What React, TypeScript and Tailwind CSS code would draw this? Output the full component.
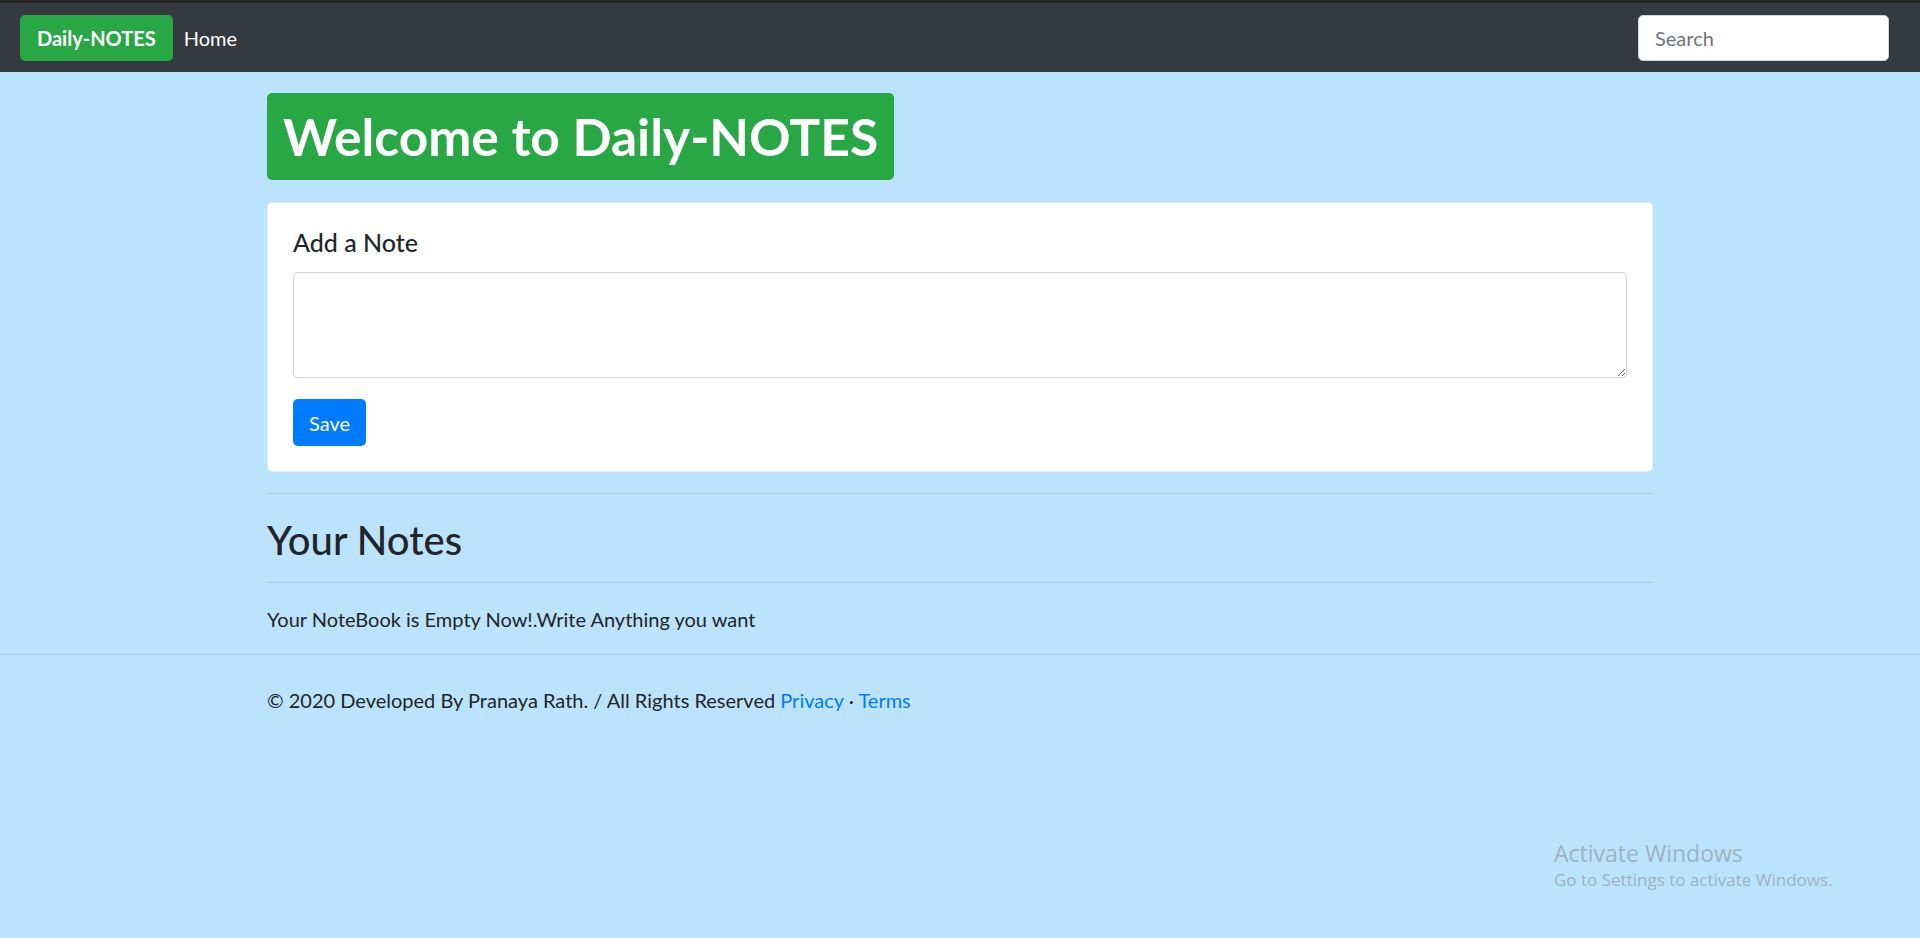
import React from "react";

export default function App() {
  return (
    <div className="relative min-h-screen bg-[#bce3fc] text-[#212529]" style={{ fontFamily: "Lato, 'Noto Sans', sans-serif" }}>
      <nav className="flex h-[72px] items-center justify-between border-t-[3px] border-[#262626] bg-[#343a40] pl-[20px] pr-[31px]">
        <div className="flex items-center">
          <a className="flex h-[46px] items-center rounded-[5px] bg-[#28a745] px-[17px] text-[20px] font-bold text-white">Daily-NOTES</a>
          <a className="ml-[11px] text-[20px] text-white">Home</a>
        </div>
        <input
          className="h-[46px] w-[251px] rounded-[5px] border border-[#ced4da] bg-white px-[16px] text-[20px] text-[#495057] outline-none placeholder:text-[#6c757d]"
          placeholder="Search"
        />
      </nav>

      <main className="mx-auto w-[1386px]">
        <h1 className="mt-[21px] flex h-[87px] w-fit items-center rounded-[5px] bg-[#28a745] px-[16px] text-[51.5px] font-bold text-white">
          Welcome to Daily-NOTES
        </h1>

        <div className="mt-[22px] rounded-[5px] border border-[#e3eef5] bg-white px-[25px] pb-[25px] pt-[24px]">
          <h5 className="text-[25px] font-medium leading-[30px]">Add a Note</h5>
          <textarea className="mt-[15px] block h-[106px] w-full rounded-[5px] border border-[#ced4da] px-3 py-2 text-[20px] outline-none" />
          <button className="mt-[21px] h-[47px] rounded-[5px] bg-[#007bff] px-[16px] text-[20px] text-white">Save</button>
        </div>

        <hr className="mt-[21px] border-t border-[#a9cfe6]" />
        <h2 className="mt-[22px] text-[40px] font-medium leading-[48px]">Your Notes</h2>
        <hr className="mt-[18px] border-t border-[#a9cfe6]" />
        <p className="mt-[21px] text-[20px] leading-[30px]">Your NoteBook is Empty Now!.Write Anything you want</p>
      </main>

      <hr className="mt-[20px] border-t border-[#a9cfe6]" />
      <footer className="mx-auto w-[1386px] pt-[30px]">
        <p className="text-[20px] leading-[30px]">
          © 2020 Developed By Pranaya Rath. / All Rights Reserved <a className="text-[#007bff]">Privacy</a> · <a className="text-[#007bff]">Terms</a>
        </p>
      </footer>

      <div className="absolute left-[1554px] top-[838px] text-[#9db3c3]" style={{ fontFamily: "'Open Sans', sans-serif" }}>
        <div className="text-[23px] leading-[30px]">Activate Windows</div>
        <div className="text-[17px] leading-[24px]">Go to Settings to activate Windows.</div>
      </div>
    </div>
  );
}
